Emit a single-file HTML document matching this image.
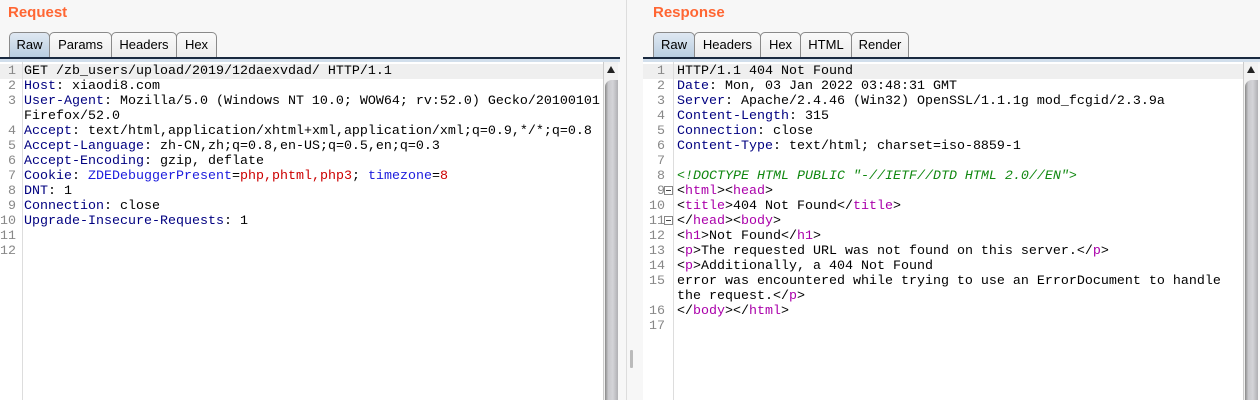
<!DOCTYPE html>
<html><head><style>
*{margin:0;padding:0;box-sizing:border-box}
body{width:1260px;height:400px;background:#f7f7f7;position:relative;overflow:hidden;font-family:"Liberation Sans",sans-serif}
.title{position:absolute;top:4px;font-weight:bold;font-size:15px;color:#ff6633}
.tabs{position:absolute;top:32px;height:26px}
.tab{position:absolute;top:0;height:26px;border:1px solid #8a8a8a;border-bottom:none;border-radius:5px 5px 0 0;background:linear-gradient(#fafafa,#ececec);font-size:13px;line-height:24px;text-align:center;color:#000}
.tab.sel{background:linear-gradient(#dfe8f2,#b8cde0)}
.bar{position:absolute;top:57px;height:2px;background:#1a2a40}
.bar2{position:absolute;top:59px;height:3px;background:#d2dfec}
.ed{position:absolute;top:62px;bottom:0;background:#fff;overflow:hidden}
.hl{position:absolute;top:2px;height:15px;left:0;right:0;background:#efefef}
.code{position:absolute;top:2px;font-family:"Liberation Mono",monospace;font-size:13.33px;line-height:15px;white-space:pre;color:#000}
.num{position:absolute;top:2px;font-family:"Liberation Mono",monospace;font-size:13.33px;line-height:15px;white-space:pre;color:#888;text-align:right}
.gl{position:absolute;top:0;bottom:0;width:1px;background:#ddd}
.k{color:#000080}.r{color:#cc0000}.b{color:#1c1cdd}.t{color:#aa00aa}.c{color:#118811;font-style:italic}
.sb{position:absolute;top:62px;bottom:0;width:15px;background:#f2f2f2;border-left:1px solid #ccc}
.sb .th{position:absolute;top:18px;left:1px;right:0;bottom:0;border-radius:7px 0 0 0;background:linear-gradient(90deg,#888,#c8c8cc 25%,#d4d4d8 60%,#b0b0b4)}
.sb .ar{position:absolute;top:4px;left:3px;width:0;height:0;border-left:4px solid transparent;border-right:4px solid transparent;border-bottom:7px solid #222}
</style></head><body>
<div class="title" style="left:8px">Request</div>
<div class="title" style="left:653px">Response</div>

<div class="tabs" style="left:0">
<div class="tab sel" style="left:9px;width:41px">Raw</div>
<div class="tab" style="left:49px;width:63px">Params</div>
<div class="tab" style="left:111px;width:66px">Headers</div>
<div class="tab" style="left:176px;width:41px">Hex</div>
</div>
<div class="tabs" style="left:0">
<div class="tab sel" style="left:653px;width:42px">Raw</div>
<div class="tab" style="left:694px;width:67px">Headers</div>
<div class="tab" style="left:760px;width:41px">Hex</div>
<div class="tab" style="left:800px;width:52px">HTML</div>
<div class="tab" style="left:851px;width:58px">Render</div>
</div>
<div class="bar" style="left:0;width:620px"></div>
<div class="bar2" style="left:0;width:620px"></div>
<div class="bar" style="left:643px;width:617px"></div>
<div class="bar2" style="left:643px;width:617px"></div>

<div style="position:absolute;left:626px;top:0;bottom:0;width:1px;background:#ddd"></div>
<div style="position:absolute;left:630px;top:350px;width:3px;height:18px;background:#bbb;border-radius:1px"></div>

<div class="ed" style="left:0;width:603px">
<div class="hl"></div>
<div class="gl" style="left:22px"></div>
<div class="num" style="left:0;width:16px">1
2
3

4
5
6
7
8
9
10
11
12</div>
<div class="code" style="left:24px">GET /zb_users/upload/2019/12daexvdad/ HTTP/1.1
<span class="k">Host</span>: xiaodi8.com
<span class="k">User-Agent</span>: Mozilla/5.0 (Windows NT 10.0; WOW64; rv:52.0) Gecko/20100101
Firefox/52.0
<span class="k">Accept</span>: text/html,application/xhtml+xml,application/xml;q=0.9,*/*;q=0.8
<span class="k">Accept-Language</span>: zh-CN,zh;q=0.8,en-US;q=0.5,en;q=0.3
<span class="k">Accept-Encoding</span>: gzip, deflate
<span class="k">Cookie</span>: <span class="b">ZDEDebuggerPresent</span>=<span class="r">php,phtml,php3</span>; <span class="b">timezone</span>=<span class="r">8</span>
<span class="k">DNT</span>: 1
<span class="k">Connection</span>: close
<span class="k">Upgrade-Insecure-Requests</span>: 1</div>
</div>
<div class="sb" style="left:603px"><div class="ar"></div><div class="th"></div></div>

<div class="ed" style="left:643px;width:600px">
<div class="hl"></div>
<div class="gl" style="left:30px"></div>
<div class="num" style="left:6px">1
2
3
4
5
6
7
8
9
10
11
12
13
14
15

16
17</div>
<div style="position:absolute;left:21px;top:124px;width:9px;height:9px;border:1px solid #888;background:#fff"><div style="position:absolute;left:1px;top:3px;width:5px;height:1px;background:#444"></div></div>
<div style="position:absolute;left:21px;top:154px;width:9px;height:9px;border:1px solid #888;background:#fff"><div style="position:absolute;left:1px;top:3px;width:5px;height:1px;background:#444"></div></div>
<div class="code" style="left:34px">HTTP/1.1 404 Not Found
<span class="k">Date</span>: Mon, 03 Jan 2022 03:48:31 GMT
<span class="k">Server</span>: Apache/2.4.46 (Win32) OpenSSL/1.1.1g mod_fcgid/2.3.9a
<span class="k">Content-Length</span>: 315
<span class="k">Connection</span>: close
<span class="k">Content-Type</span>: text/html; charset=iso-8859-1

<span class="c">&lt;!DOCTYPE HTML PUBLIC "-//IETF//DTD HTML 2.0//EN"&gt;</span>
&lt;<span class="t">html</span>&gt;&lt;<span class="t">head</span>&gt;
&lt;<span class="t">title</span>&gt;404 Not Found&lt;/<span class="t">title</span>&gt;
&lt;/<span class="t">head</span>&gt;&lt;<span class="t">body</span>&gt;
&lt;<span class="t">h1</span>&gt;Not Found&lt;/<span class="t">h1</span>&gt;
&lt;<span class="t">p</span>&gt;The requested URL was not found on this server.&lt;/<span class="t">p</span>&gt;
&lt;<span class="t">p</span>&gt;Additionally, a 404 Not Found
error was encountered while trying to use an ErrorDocument to handle
the request.&lt;/<span class="t">p</span>&gt;
&lt;/<span class="t">body</span>&gt;&lt;/<span class="t">html</span>&gt;</div>
</div>
<div class="sb" style="left:1243px"><div class="ar"></div><div class="th"></div></div>
</body></html>
